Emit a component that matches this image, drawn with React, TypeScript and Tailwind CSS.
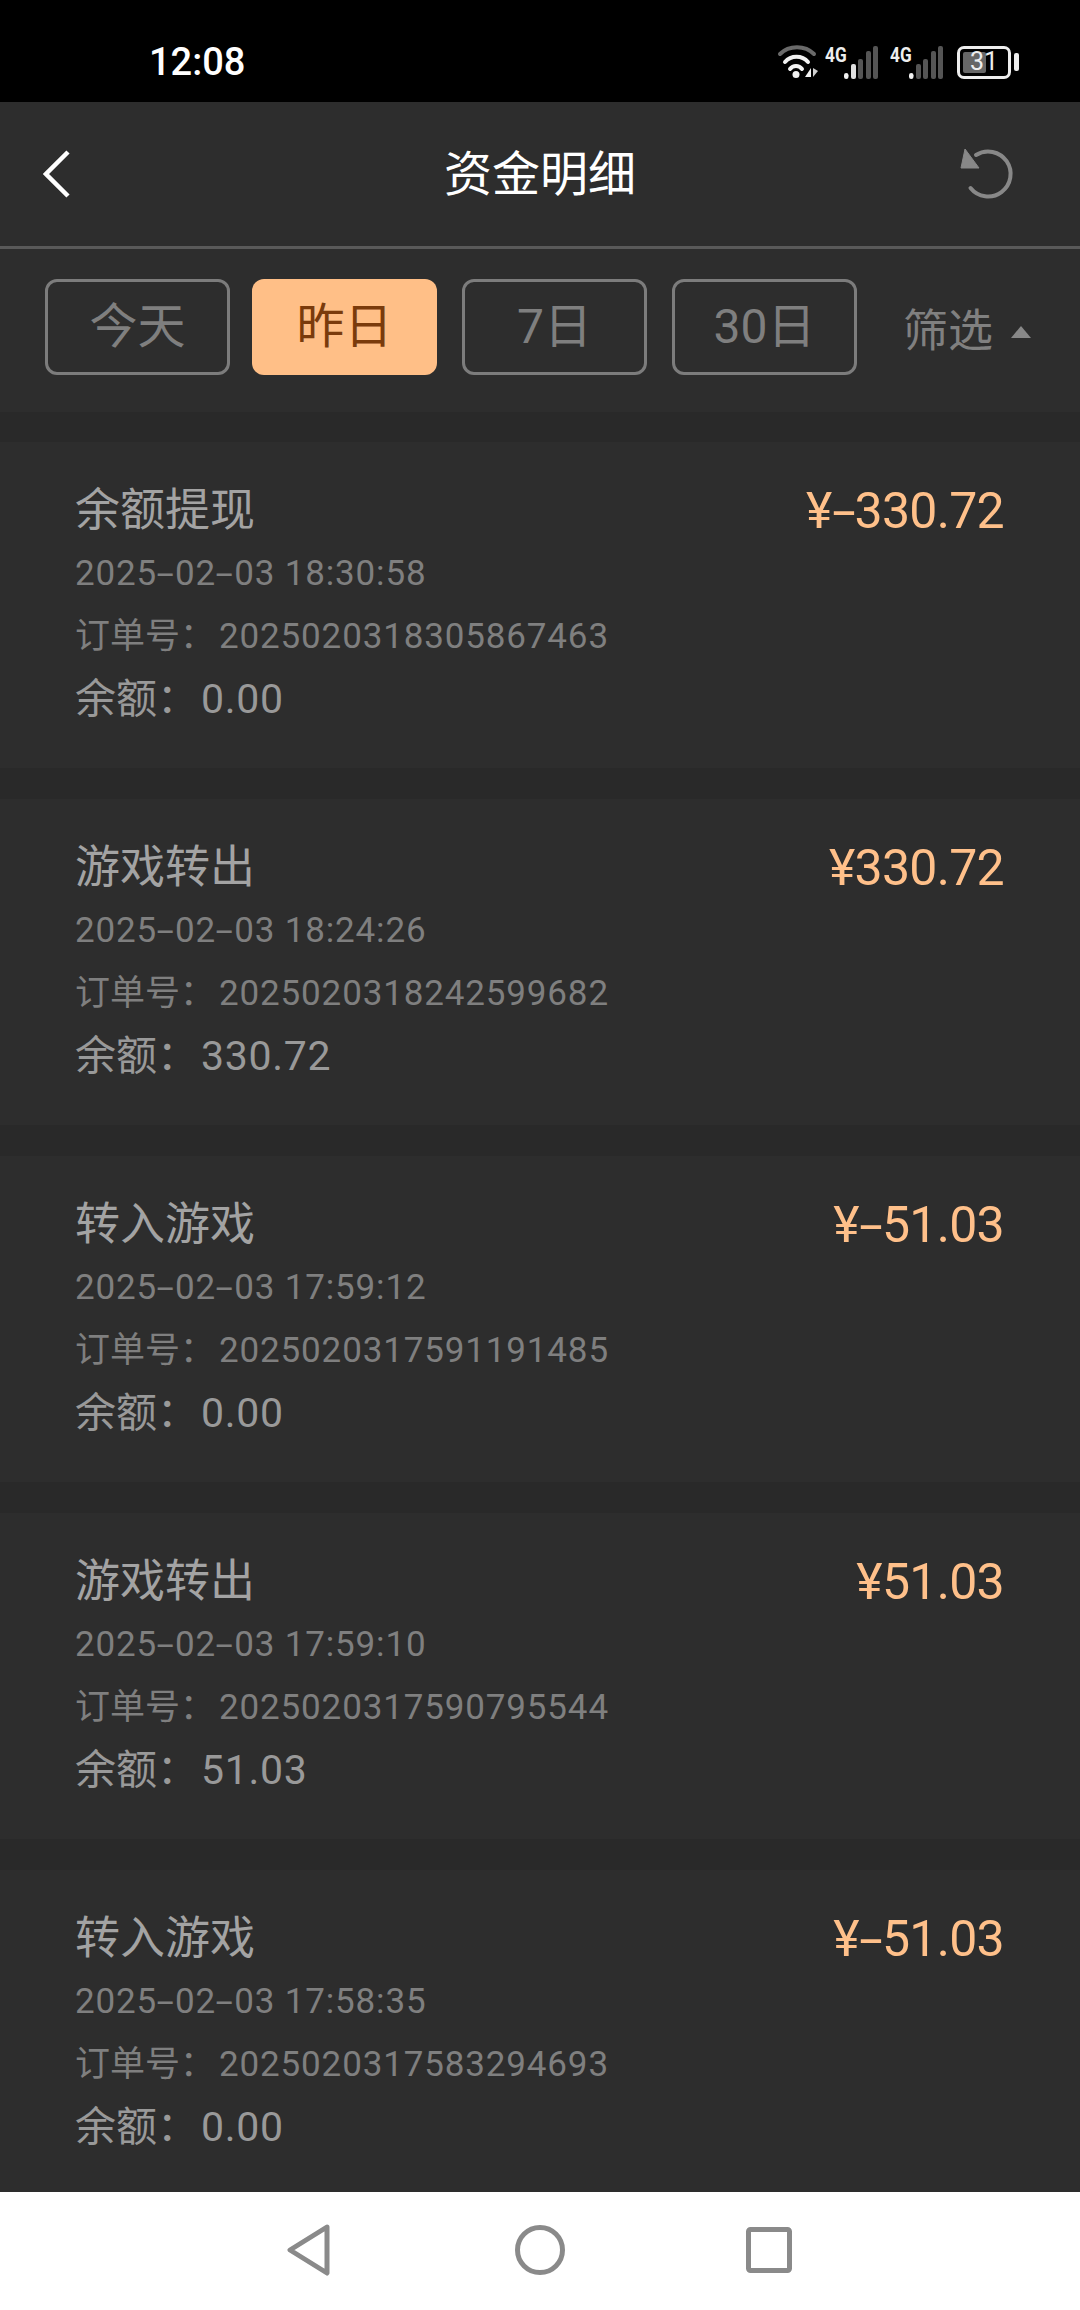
type Record = {
  title: string;
  amount: string;
  time: string;
  orderNo: string;
  balance: string;
};

const records: Record[] = [
  { title: '余额提现', amount: '¥-330.72', time: '2025-02-03 18:30:58', orderNo: '2025020318305867463', balance: '0.00' },
  { title: '游戏转出', amount: '¥330.72', time: '2025-02-03 18:24:26', orderNo: '2025020318242599682', balance: '330.72' },
  { title: '转入游戏', amount: '¥-51.03', time: '2025-02-03 17:59:12', orderNo: '2025020317591191485', balance: '0.00' },
  { title: '游戏转出', amount: '¥51.03', time: '2025-02-03 17:59:10', orderNo: '2025020317590795544', balance: '51.03' },
  { title: '转入游戏', amount: '¥-51.03', time: '2025-02-03 17:58:35', orderNo: '2025020317583294693', balance: '0.00' },
];

const tabs = ['今天', '昨日', '7日', '30日'];

// Roboto's hyphen is too short next to these digits, so it gets stretched
function Dashed({ text, dashClass }: { text: string; dashClass: string }) {
  const parts = text.split('-');
  return (
    <span>
      {parts.map((part, i) => (
        <span key={i}>
          {i > 0 && <span className={dashClass}>-</span>}
          {part}
        </span>
      ))}
    </span>
  );
}

function WifiIcon() {
  return (
    <svg width="42" height="34" viewBox="0 0 42 34" fill="none" strokeLinecap="round">
      <path d="M3 9 C12 0 28 0 37 9" stroke="#6a6a6a" strokeWidth="4" />
      <path d="M8 17 C14 10 25 10 31 17" stroke="#f2f2f2" strokeWidth="4" />
      <path d="M13 24 C16 20 22 20 25 24" stroke="#f2f2f2" strokeWidth="4" />
      <circle cx="19" cy="29.5" r="3.5" fill="#f2f2f2" />
      <path d="M34 23 V32 H28 Z" fill="#f2f2f2" />
      <path d="M36 23 V32 L41 26 Z" fill="#cfcfcf" />
    </svg>
  );
}

function SignalIcon({ secondBar }: { secondBar: string }) {
  return (
    <div className="relative w-[53px] h-[33px]">
      <span className="absolute left-0 top-[-3px] font-['Roboto',sans-serif] font-bold text-[21px] leading-[24px] text-[#eeeeee] scale-x-[0.82] origin-left">
        4G
      </span>
      <svg className="absolute left-0 top-0" width="53" height="33" viewBox="0 0 53 33">
        <rect x="19" y="27" width="4.5" height="6" rx="2.2" fill="#f2f2f2" />
        <rect x="26" y="18" width="5" height="15" rx="2" fill={secondBar} />
        <rect x="33" y="13" width="5" height="20" rx="2" fill="#555555" />
        <rect x="41" y="5" width="5" height="28" rx="2" fill="#555555" />
        <rect x="48" y="0" width="5" height="33" rx="2" fill="#555555" />
      </svg>
    </div>
  );
}

function BatteryIcon() {
  return (
    <div className="flex items-center gap-[3px]">
      <div className="relative w-[54px] h-[33px] rounded-[7px] border-[3px] border-[#eeeeee]">
        <div className="absolute left-[3px] top-[3px] bottom-[3px] w-[23px] rounded-[2px] bg-[#666666]" />
        <span className="absolute inset-0 flex items-center justify-center font-['Roboto',sans-serif] text-[25px] text-[#eeeeee]">
          31
        </span>
      </div>
      <div className="w-[5px] h-[18px] rounded-[2px] bg-[#eeeeee]" />
    </div>
  );
}

function RefreshIcon() {
  return (
    <svg width="56" height="54" viewBox="0 0 56 54" fill="none">
      <path d="M18 8 A22.5 22.5 0 1 1 12.5 41" stroke="#888888" strokeWidth="4" strokeLinecap="round" />
      <path d="M7 2 L3 21 L21 21 Z" fill="#888888" stroke="#888888" strokeLinejoin="round" />
    </svg>
  );
}

function RecordCard({ record }: { record: Record }) {
  return (
    <div className="bg-[#2d2d2d] h-[326px] pt-[37px] pl-[75px] pr-[76px] flex justify-between shrink-0">
      <div className="flex flex-col">
        <div className="h-[64px] flex items-center text-[45px] text-[#a3a3a3]">{record.title}</div>
        <div className="h-[63px] flex items-center text-[35px] tracking-[0.85px] text-[#7f7f7f]">
          <Dashed text={record.time} dashClass="inline-block w-[18px] text-center scale-x-[1.8]" />
        </div>
        <div className="h-[63px] flex items-center text-[35px] text-[#7f7f7f]">
          订单号：<span className="ml-[4px] tracking-[0.85px]">{record.orderNo}</span>
        </div>
        <div className="h-[61px] flex items-center text-[41px] text-[#999999]">
          余额：<span className="ml-[3px] tracking-[0.7px]">{record.balance}</span>
        </div>
      </div>
      <div className="h-[64px] flex items-center text-[50px] tracking-[-0.7px] text-[#ffc08a]">
        <Dashed text={record.amount} dashClass="inline-block w-[23px] text-center scale-x-[1.7]" />
      </div>
    </div>
  );
}

export default function App() {
  return (
    <div className="w-[1080px] h-[2310px] flex flex-col overflow-hidden bg-[#292929] font-['Roboto','Noto_Sans_CJK_SC',sans-serif]">
      {/* status bar */}
      <div className="h-[102px] bg-black flex items-center shrink-0 pt-[22px] pl-[149px] pr-[61px] justify-between">
        <span className="text-[38px] font-medium text-white">12:08</span>
        <div className="flex items-center">
          <WifiIcon />
          <div className="ml-[6px]">
            <SignalIcon secondBar="#e0e0e0" />
          </div>
          <div className="ml-[12px]">
            <SignalIcon secondBar="#555555" />
          </div>
          <div className="ml-[14px]">
            <BatteryIcon />
          </div>
        </div>
      </div>

      {/* title bar */}
      <div className="relative h-[147px] bg-[#2d2d2d] border-b-[3px] border-[#595959] flex items-center justify-between pl-[43px] pr-[66px] shrink-0">
        <svg width="30" height="50" viewBox="0 0 30 50" fill="none">
          <path d="M25 3 L3 25 L25 47" stroke="#ffffff" strokeWidth="4.5" />
        </svg>
        <span className="absolute inset-x-0 mt-[2px] text-center text-[48px] text-white">资金明细</span>
        <RefreshIcon />
      </div>

      {/* date filter */}
      <div className="h-[163px] bg-[#2d2d2d] flex items-start pt-[30px] pl-[45px] shrink-0">
        <div className="flex gap-[25px]">
          {tabs.map((tab) =>
            tab === '昨日' ? (
              <div key={tab} className="-ml-[3px] w-[185px] h-[96px] rounded-[12px] bg-[#ffbf87] flex items-center justify-center text-[48px] text-[#7a3b0c]">
                {tab}
              </div>
            ) : (
              <div key={tab} className="w-[185px] h-[96px] rounded-[12px] border-[3px] border-[#7c7c7c] flex items-center justify-center text-[48px] text-[#7f7f7f]">
                {tab}
              </div>
            ),
          )}
        </div>
        <div className="ml-[46px] mt-[5px] h-[96px] flex items-center gap-[18px] text-[45px] text-[#808080]">
          筛选
          <span className="w-0 h-0 border-x-[10px] border-x-transparent border-b-[12px] border-b-[#888888]" />
        </div>
      </div>

      {/* record list */}
      <div className="flex-1 min-h-0 overflow-hidden flex flex-col gap-[31px] pt-[30px]">
        {records.map((record, i) => (
          <RecordCard key={i} record={record} />
        ))}
      </div>

      {/* navigation bar */}
      <div className="h-[118px] bg-white shrink-0 flex items-center pl-[287px] pb-[2px]">
        <svg width="44" height="52" viewBox="0 0 44 52" fill="none">
          <path d="M40 3 L3 26 L40 49 Z" stroke="#8a8a8a" strokeWidth="5" strokeLinejoin="round" />
        </svg>
        <svg width="50" height="50" viewBox="0 0 50 50" fill="none" className="ml-[184px]">
          <circle cx="25" cy="25" r="22.5" stroke="#8a8a8a" strokeWidth="5" />
        </svg>
        <svg width="46" height="46" viewBox="0 0 46 46" fill="none" className="ml-[181px]">
          <rect x="2.5" y="2.5" width="41" height="41" rx="2" stroke="#8a8a8a" strokeWidth="5" />
        </svg>
      </div>
    </div>
  );
}
